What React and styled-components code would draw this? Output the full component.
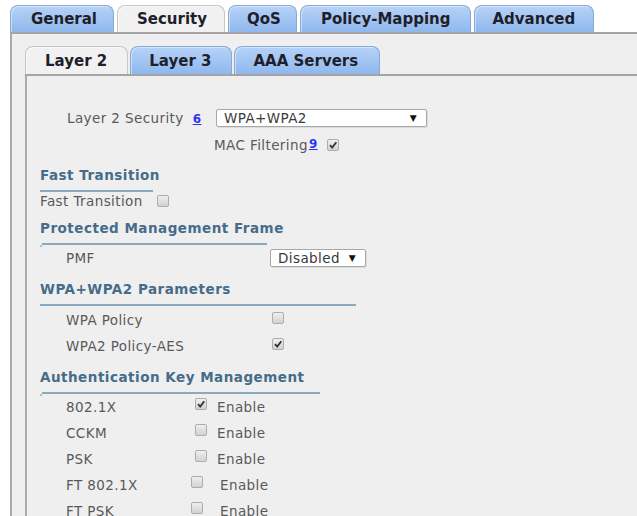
import React from 'react'
import styled, { createGlobalStyle, css } from 'styled-components'

const GlobalStyle = createGlobalStyle`
html, body {
    margin: 0;
    height: 100%;
    overflow: hidden;
    background: #fff;
}
body {
    font-family: "DejaVu Sans", Verdana, sans-serif;
}
#root {
    height: 100%;
}
`

const Page = styled.div`
height: 100%;
box-sizing: border-box;
padding: 5px 0 0 10px;
display: flex;
flex-direction: column;
`

const TabBar = styled.div`
display: flex;
align-items: flex-end;
gap: ${p => p.$gap}px;
border-bottom: 2px solid #a4a4a4;
`

const Tab = styled.div`
height: ${p => p.$h}px;
box-sizing: border-box;
padding: 0 ${p => p.$pr || 20}px 0 ${p => p.$pl || 20}px;
display: flex;
align-items: center;
font-size: 15px;
font-weight: bold;
color: #1f1f2b;
white-space: nowrap;
border: 1px solid ${p => (p.$active ? '#c6c6c6' : '#88a8d6')};
border-bottom: none;
border-radius: 8px 8px 0 0;
background: ${p => (p.$active ? '#f1f1f1' : 'linear-gradient(#b6d2f7, #8fb8ee)')};
box-shadow: inset 1px 1px 0 ${p => (p.$active ? '#fafafa' : 'rgba(255,255,255,0.45)')};
`

const OuterPanel = styled.div`
flex: 1;
display: flex;
flex-direction: column;
background: #efefef;
border-left: 2px solid #ababab;
padding: 12px 0 0 13px;
`

const InnerPanel = styled.div`
flex: 1;
background: #efefef;
border-left: 2px solid #ababab;
padding: 33px 0 0 13px;
`

const Row = styled.div`
display: flex;
align-items: center;
height: ${p => p.$h || 26}px;
margin-top: ${p => p.$mt || 0}px;
padding-left: ${p => p.$indent || 0}px;
`

const Label = styled.span`
flex-shrink: 0;
width: ${p => (p.$w ? `${p.$w}px` : 'auto')};
margin-left: ${p => p.$ml || 0}px;
font-size: 13.5px;
letter-spacing: 0.4px;
color: #595959;
white-space: nowrap;
`

const HelpLink = styled.a`
font-size: 12px;
font-weight: bold;
color: #2b36ee;
text-decoration: underline;
margin-left: ${p => p.$ml}px;
vertical-align: ${p => p.$up ? '2px' : 'baseline'};
`

const Select = styled.div`
width: ${p => p.$w}px;
height: 18px;
box-sizing: border-box;
display: flex;
align-items: center;
justify-content: space-between;
padding: 0 9px 0 7px;
background: #fff;
border: 1px solid #a8a8a8;
border-radius: 2px;
box-shadow: 1px 1px 0 rgba(0,0,0,0.08);
font-size: 13.5px;
letter-spacing: 0.4px;
color: #3a3a3a;

span {
    font-size: 9px;
    color: #111;
}
`

const Box = styled.span`
flex-shrink: 0;
width: 12px;
height: 12px;
box-sizing: border-box;
display: inline-flex;
align-items: center;
justify-content: center;
border: 1px solid #adadad;
border-radius: 2px;
background: linear-gradient(#efefef, #d2d2d2);
margin-left: ${p => p.$ml || 0}px;
margin-bottom: ${p => p.$lift || 0}px;
`

const SectionTitle = styled.div`
margin-top: ${p => p.$mt}px;
line-height: 16px;
font-size: 13.5px;
font-weight: bold;
letter-spacing: 0.5px;
color: #456c8a;
white-space: nowrap;
`

const Rule = styled.div`
position: relative;
margin-top: 7px;
margin-left: ${p => (p.$dot ? 2 : 0)}px;
width: ${p => p.$w}px;
height: 2px;
background: #88a9c0;

${p => p.$dot && css`
    &::before {
        content: '';
        position: absolute;
        left: -2px;
        top: 2px;
        width: 2px;
        height: 2px;
        background: #bdbdbd;
    }
`}
`

function Check({ on, ml, lift }) {
    return (
        <Box $ml={ml} $lift={lift}>
            {on && (
                <svg width="10" height="10" viewBox="0 0 10 10">
                    <path d="M2 5.2 L4.2 7.6 L8.3 2.2" fill="none" stroke="#333" strokeWidth="1.8" />
                </svg>
            )}
        </Box>
    )
}

const akm = [
    { name: '802.1X', on: true, w: 129, gap: 10 },
    { name: 'CCKM', w: 129, gap: 10 },
    { name: 'PSK', w: 129, gap: 10 },
    { name: 'FT 802.1X', w: 125, gap: 17 },
    { name: 'FT PSK', w: 125, gap: 17 },
]

function App() {
    return (
        <Page>
            <GlobalStyle />
            <TabBar $gap={3}>
                <Tab $h={27} $pl={20} $pr={16}>General</Tab>
                <Tab $h={27} $active $pl={19} $pr={17}>Security</Tab>
                <Tab $h={27} $pl={18} $pr={15}>QoS</Tab>
                <Tab $h={27}>Policy-Mapping</Tab>
                <Tab $h={27} $pl={17} $pr={18}>Advanced</Tab>
            </TabBar>
            <OuterPanel>
                <TabBar $gap={2}>
                    <Tab $h={28} $active $pl={19}>Layer 2</Tab>
                    <Tab $h={28} $pl={18}>Layer 3</Tab>
                    <Tab $h={28} $pl={18} $pr={21}>AAA Servers</Tab>
                </TabBar>
                <InnerPanel>
                    <Row $h={18} $indent={27}>
                        <Label $w={149}>
                            Layer 2 Security
                            <HelpLink href="#l2" $ml={9}>6</HelpLink>
                        </Label>
                        <Select $w={211}>WPA+WPA2<span>▼</span></Select>
                    </Row>
                    <Row $h={14} $mt={11} $indent={174}>
                        <Label>
                            MAC Filtering
                            <HelpLink href="#mac" $ml={1} $up>9</HelpLink>
                        </Label>
                        <Check on ml={9} />
                    </Row>

                    <SectionTitle $mt={15}>Fast Transition</SectionTitle>
                    <Rule $w={113} />
                    <Row $h={14} $mt={2}>
                        <Label $w={117}>Fast Transition</Label>
                        <Check />
                    </Row>

                    <SectionTitle $mt={12}>Protected Management Frame</SectionTitle>
                    <Rule $w={225} $dot />
                    <Row $h={18} $mt={4} $indent={26}>
                        <Label $w={204}>PMF</Label>
                        <Select $w={96}>Disabled<span>▼</span></Select>
                    </Row>

                    <SectionTitle $mt={14}>WPA+WPA2 Parameters</SectionTitle>
                    <Rule $w={316} />
                    <Row $mt={1} $indent={26}>
                        <Label $w={206}>WPA Policy</Label>
                        <Check lift={4} />
                    </Row>
                    <Row $indent={26}>
                        <Label $w={206}>WPA2 Policy-AES</Label>
                        <Check on lift={4} />
                    </Row>

                    <SectionTitle $mt={10}>Authentication Key Management</SectionTitle>
                    <Rule $w={278} $dot />
                    {akm.map(k => (
                        <Row key={k.name} $indent={26}>
                            <Label $w={k.w}>{k.name}</Label>
                            <Check on={k.on} lift={6} />
                            <Label $ml={k.gap}>Enable</Label>
                        </Row>
                    ))}
                </InnerPanel>
            </OuterPanel>
        </Page>
    )
}

export default App
